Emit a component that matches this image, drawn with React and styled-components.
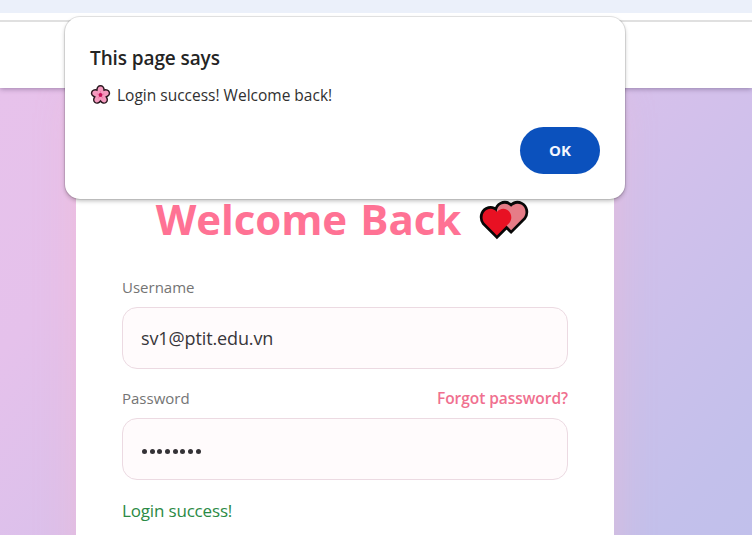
import React from "react";
import styled, { createGlobalStyle } from "styled-components";

const Global = createGlobalStyle`
  * { box-sizing: border-box; }
  body { margin: 0; overflow: hidden; font-family: "Open Sans", "Noto Sans", sans-serif; }
`;

const Screen = styled.div`
  position: relative;
  display: flex;
  flex-direction: column;
  width: 752px;
  height: 535px;
  overflow: hidden;
  background: #fff;
`;

const BrowserStrip = styled.div`
  flex: none;
  height: 22px;
  border-bottom: 2px solid #e0e0e0;
  background: linear-gradient(#ebf0fa 13px, #fff 13px);
`;

const SiteHeader = styled.header`
  position: relative;
  z-index: 1;
  flex: none;
  height: 66px;
  background: #fff;
  box-shadow: 0 1px 5px rgba(60, 40, 80, 0.42);
  clip-path: inset(0 0 -12px 0);
`;

const Backdrop = styled.main`
  flex: 1;
  min-height: 0;
  padding-left: 76px;
  background: linear-gradient(135deg, #e7c2eb 0%, #e5c1eb 22%, #d3c0eb 60%, #c3c0eb 92%, #c1c0eb 100%);
`;

const Card = styled.section`
  width: 538px;
  height: 560px;
  padding: 105px 46px 0;
  background: #fff;
  box-shadow: 0 12px 36px rgba(255, 182, 193, 0.42);
`;

const Title = styled.h1`
  display: flex;
  align-items: center;
  justify-content: center;
  gap: 18px;
  height: 52px;
  margin: 0 0 32px;
  padding-right: 5px;
  color: #ff7294;
  font-size: 42px;
  font-weight: 700;
  letter-spacing: -0.1px;
  word-spacing: 2.5px;
  line-height: 52px;
  white-space: nowrap;
`;

const FieldHead = styled.div`
  display: flex;
  justify-content: space-between;
  align-items: center;
  height: 20px;
  margin-bottom: 10px;
  font-size: 15px;
  white-space: nowrap;
`;

const Label = styled.label`
  color: #747474;
`;

const ForgotLink = styled.a`
  color: #f0708f;
  font-size: 15.5px;
  font-weight: 600;
  letter-spacing: -0.05px;
`;

const Field = styled.div`
  display: flex;
  align-items: center;
  height: 62px;
  margin-bottom: 19px;
  padding: 0 18px;
  border: 1px solid #ecdae2;
  border-radius: 15px;
  background: #fffbfc;
  color: #38363a;
  font-size: 18px;
  letter-spacing: -0.12px;
`;

const Dots = styled.span`
  display: flex;
  gap: 2.7px;
  padding: 4px 0 0 1px;
`;

const Dot = styled.i`
  width: 5px;
  height: 5px;
  border-radius: 50%;
  background: #343236;
`;

const Status = styled.p`
  margin: 0;
  color: #2b8a45;
  font-size: 17px;
  letter-spacing: -0.17px;
  line-height: 24px;
`;

const Dialog = styled.div`
  position: absolute;
  z-index: 2;
  left: 65px;
  top: 17px;
  display: flex;
  flex-direction: column;
  width: 560px;
  height: 182px;
  padding: 28px 25px 25px;
  border-radius: 15px;
  background: #fff;
  box-shadow: 0 0 0 1px rgba(0, 0, 0, 0.09), 0 2px 4px rgba(0, 0, 0, 0.26);
`;

const DialogTitle = styled.h2`
  margin: 0;
  color: #242424;
  font-size: 19px;
  font-weight: 600;
  letter-spacing: -0.1px;
  line-height: 26px;
`;

const Message = styled.p`
  display: flex;
  align-items: center;
  gap: 6px;
  margin: 12px 0 0;
  color: #303030;
  font-size: 15.5px;
  line-height: 24px;
`;

const OkButton = styled.button`
  align-self: flex-end;
  width: 80px;
  height: 47px;
  margin-top: auto;
  padding: 0;
  border: 0;
  border-radius: 24px;
  background: #0b51bd;
  color: #f4f7ff;
  font: 700 15px/47px "Open Sans", sans-serif;
`;

const HeartsSvg = styled.svg`
  flex: none;
  display: block;
  margin-top: 2px;
`;

const HEART = "M18 35 L3 20 C-1 14 1 7 6 4.500 C11 2 15 4 18 7 C21 4 25 2 30 4.500 C35 7 37 14 33 20 Z";

function Hearts() {
  return (
    <HeartsSvg width="50" height="40" viewBox="0 0 50 40">
      <g stroke="#080808" strokeWidth="6.500" strokeLinejoin="miter">
        <path transform="translate(17 .8) scale(.84)" d={HEART} fill="#080808" />
        <path transform="translate(2.800 6) scale(.84)" d={HEART} fill="#080808" />
      </g>
      <path transform="translate(17 .8) scale(.84)" d={HEART} fill="#e67c87" />
      <path transform="translate(2.800 6) scale(.84)" d={HEART} fill="#e81123" />
    </HeartsSvg>
  );
}

function Blossom() {
  const petals = [0, 72, 144, 216, 288];
  return (
    <svg width="21" height="20" viewBox="0 0 20 20">
      {petals.map((a) => (
        <ellipse key={a} cx="10" cy="4.800" rx="3.100" ry="3.600" transform={`rotate(${a} 10 10)`} fill="#f59abf" stroke="#2b1820" strokeWidth="2.400" />
      ))}
      {petals.map((a) => (
        <ellipse key={a} cx="10" cy="5.800" rx="2.900" ry="4.300" transform={`rotate(${a} 10 10)`} fill="#f59abf" />
      ))}
      {petals.map((a) => (
        <path key={a} d="M10 9V6" transform={`rotate(${a} 10 10)`} stroke="#ee78a8" strokeWidth="1" />
      ))}
      <circle cx="10" cy="10" r="1.900" fill="#c40f55" />
    </svg>
  );
}

export default function App() {
  return (
    <>
      <Global />
      <Screen>
        <BrowserStrip />
        <SiteHeader />
        <Backdrop>
          <Card>
            <Title>
              <span>Welcome Back</span>
              <Hearts />
            </Title>
            <FieldHead>
              <Label>Username</Label>
            </FieldHead>
            <Field>sv1@ptit.edu.vn</Field>
            <FieldHead>
              <Label>Password</Label>
              <ForgotLink>Forgot password?</ForgotLink>
            </FieldHead>
            <Field>
              <Dots>
                {Array.from({ length: 8 }, (_, i) => (
                  <Dot key={i} />
                ))}
              </Dots>
            </Field>
            <Status>Login success!</Status>
          </Card>
        </Backdrop>
        <Dialog role="alertdialog">
          <DialogTitle>This page says</DialogTitle>
          <Message>
            <Blossom />
            <span>Login success! Welcome back!</span>
          </Message>
          <OkButton>OK</OkButton>
        </Dialog>
      </Screen>
    </>
  );
}
